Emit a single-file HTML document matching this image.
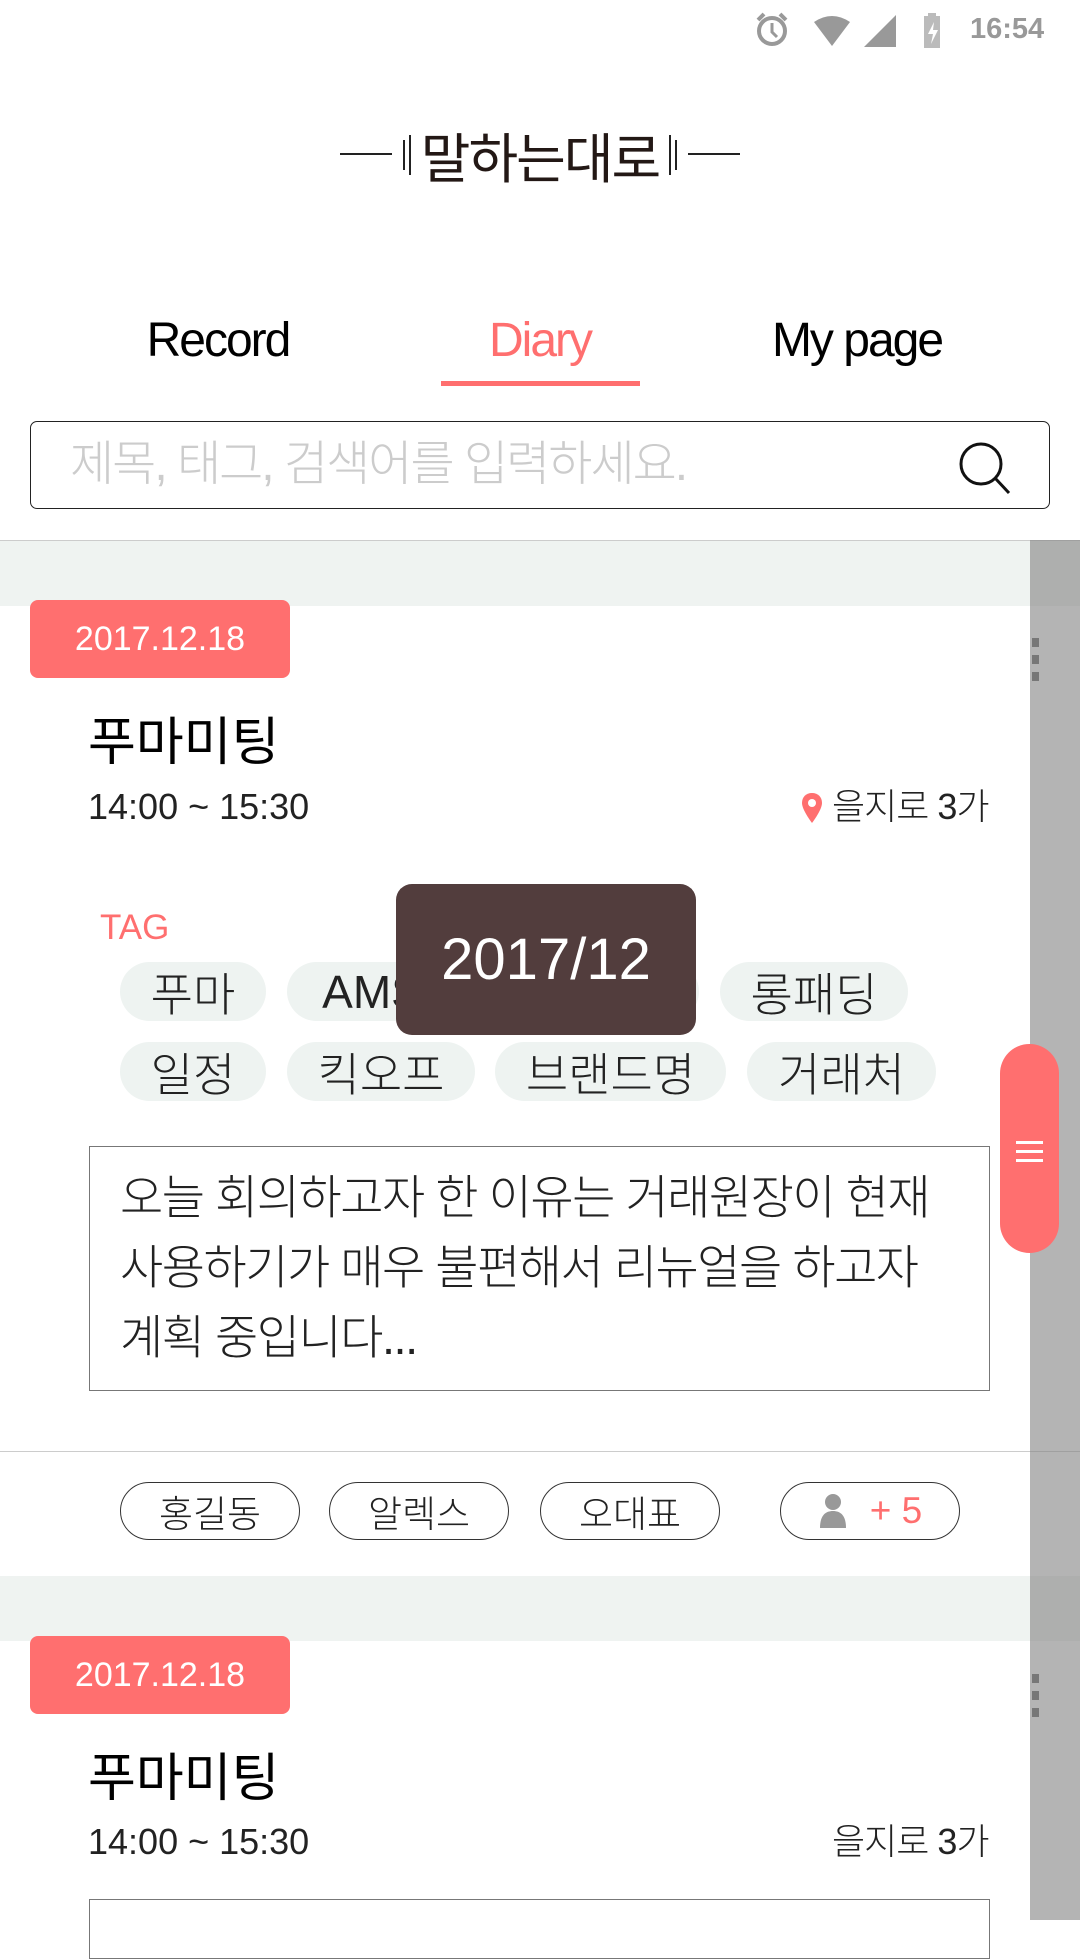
<!DOCTYPE html>
<html><head><meta charset="utf-8"><style>
*{margin:0;padding:0;box-sizing:border-box}
body{width:1080px;height:1920px;position:relative;overflow:hidden;background:#fff;font-family:"Liberation Sans","Noto Sans CJK KR",sans-serif;font-weight:300;color:#111}
.a{position:absolute}
.c{display:flex;align-items:center;justify-content:center}
.chip{position:absolute;height:59px;background:#eef3f1;border-radius:30px;font-size:46px;display:flex;align-items:center;justify-content:center;color:#222}
.p{position:absolute;top:1482px;height:58px;width:180px;border:1.5px solid #333;border-radius:29px;font-size:37px;display:flex;align-items:center;justify-content:center;color:#222}
.badge{position:absolute;left:30px;width:260px;height:78px;background:#ff6f6f;border-radius:8px;color:#fff;font-size:34px;display:flex;align-items:center;justify-content:center}
.dots{position:absolute;left:1032px;width:8px}
.dots i{display:block;width:7px;height:9px;background:#666;margin-bottom:8px}
</style></head><body>
<!-- status bar -->
<svg class="a" style="left:752px;top:10px" width="300" height="40" viewBox="0 0 300 40">
<circle cx="20" cy="21" r="13" fill="none" stroke="#999" stroke-width="4"/><path d="M20 13v9l5 5" stroke="#999" stroke-width="3" fill="none"/><path d="M6 10l6-6M34 10l-6-6" stroke="#999" stroke-width="4"/>
<path d="M62 12 Q80 0 98 12 L80 36Z" fill="#999"/>
<path d="M112 37 L144 5 L144 37Z" fill="#999"/>
<rect x="172" y="6" width="16" height="32" fill="#bbb"/><rect x="176" y="3" width="8" height="4" fill="#bbb"/><path d="M182 12l-6 12h5l-2 10 7-14h-5z" fill="#fff"/>
</svg>
<div class="a" style="left:970px;top:13px;font-size:29px;color:#999;font-weight:700">16:54</div>
<!-- title -->
<div class="a" style="left:340px;top:153px;width:52px;height:2px;background:#222"></div>
<div class="a" style="left:403px;top:140px;width:2px;height:30px;background:#222"></div>
<div class="a" style="left:409px;top:135px;width:2px;height:40px;background:#222"></div>
<div class="a" style="left:688px;top:153px;width:52px;height:2px;background:#222"></div>
<div class="a" style="left:675px;top:140px;width:2px;height:30px;background:#222"></div>
<div class="a" style="left:669px;top:135px;width:2px;height:40px;background:#222"></div>
<div class="a c" style="left:410px;top:118px;width:260px;height:72px;font-size:54px;font-weight:400;color:#231815;letter-spacing:-2px">말하는대로</div>
<!-- tabs -->
<div class="a c" style="left:118px;top:310px;width:200px;height:60px;font-size:48px;color:#000;letter-spacing:-2px;font-weight:400">Record</div>
<div class="a c" style="left:440px;top:310px;width:200px;height:60px;font-size:48px;color:#ff6f6f;letter-spacing:-2px;font-weight:400">Diary</div>
<div class="a c" style="left:737px;top:310px;width:240px;height:60px;font-size:48px;color:#000;letter-spacing:-2px;font-weight:400">My page</div>
<div class="a" style="left:441px;top:381px;width:199px;height:5px;background:#ff6f6f"></div>
<!-- search -->
<div class="a" style="left:30px;top:421px;width:1020px;height:88px;border:1.5px solid #222;border-radius:7px"></div>
<div class="a" style="left:70px;top:434px;font-size:48px;color:#ccc;letter-spacing:-2px;line-height:62px">제목, 태그, 검색어를 입력하세요.</div>
<svg class="a" style="left:955px;top:438px" width="60" height="60" viewBox="0 0 60 60"><circle cx="26" cy="26" r="20" fill="none" stroke="#111" stroke-width="3"/><path d="M40 40l14 15" stroke="#111" stroke-width="3"/></svg>
<!-- bands -->
<div class="a" style="left:0;top:540px;width:1080px;height:66px;background:#eff3f1;border-top:1px solid #ccc"></div>
<div class="a" style="left:0;top:1576px;width:1080px;height:65px;background:#eff3f1"></div>
<!-- card 1 -->
<div class="badge" style="top:600px">2017.12.18</div>
<div class="dots" style="top:638px"><i></i><i></i><i></i></div>
<div class="a" style="left:88px;top:710px;font-size:52px;color:#000;font-weight:400;line-height:66px">푸마미팅</div>
<div class="a" style="left:88px;top:784px;font-size:36px;line-height:46px;color:#222">14:00 ~ 15:30</div>
<svg class="a" style="left:801px;top:792px" width="22" height="32" viewBox="0 0 22 32"><path d="M11 1C5 1 1 5 1 11c0 7 10 20 10 20s10-13 10-20C21 5 17 1 11 1z" fill="#ff6f6f"/><circle cx="11" cy="11" r="4" fill="#fff"/></svg>
<div class="a" style="left:832px;top:784px;font-size:36px;line-height:46px;color:#222;letter-spacing:-1px">을지로 3가</div>
<div class="a" style="left:100px;top:906px;font-size:35px;color:#ff6f6f;line-height:44px">TAG</div>
<div class="chip" style="left:120px;top:962px;width:146px">푸마</div>
<div class="chip" style="left:287px;top:962px;width:170px">AMS</div>
<div class="chip" style="left:471px;top:962px;width:228px">거래원장</div>
<div class="chip" style="left:720px;top:962px;width:188px">롱패딩</div>
<div class="chip" style="left:120px;top:1042px;width:146px">일정</div>
<div class="chip" style="left:287px;top:1042px;width:188px">킥오프</div>
<div class="chip" style="left:495px;top:1042px;width:231px">브랜드명</div>
<div class="chip" style="left:747px;top:1042px;width:189px">거래처</div>
<div class="a c" style="left:396px;top:884px;width:300px;height:151px;background:#523d3d;border-radius:16px;color:#fff;font-size:58px;font-weight:400">2017/12</div>
<div class="a" style="left:89px;top:1146px;width:901px;height:245px;border:1.5px solid #777;padding:16px 0 0 30px;font-size:47px;line-height:70px;color:#222;letter-spacing:-1.5px;white-space:nowrap">오늘 회의하고자 한 이유는 거래원장이 현재<br>사용하기가 매우 불편해서 리뉴얼을 하고자<br>계획 중입니다...</div>
<div class="a" style="left:0;top:1451px;width:1080px;height:1px;background:#ccc"></div>
<div class="p" style="left:120px">홍길동</div>
<div class="p" style="left:329px">알렉스</div>
<div class="p" style="left:540px">오대표</div>
<div class="p" style="left:780px;color:#ff6f6f"><svg width="30" height="38" viewBox="0 0 30 38" style="margin-right:22px"><circle cx="15" cy="10" r="8" fill="#999"/><path d="M2 36c0-12 5-17 13-17s13 5 13 17z" fill="#999"/></svg>+ 5</div>
<!-- card 2 -->
<div class="badge" style="top:1636px">2017.12.18</div>
<div class="dots" style="top:1674px"><i></i><i></i><i></i></div>
<div class="a" style="left:88px;top:1746px;font-size:52px;color:#000;font-weight:400;line-height:66px">푸마미팅</div>
<div class="a" style="left:88px;top:1819px;font-size:36px;line-height:46px;color:#222">14:00 ~ 15:30</div>
<div class="a" style="left:832px;top:1819px;font-size:36px;line-height:46px;color:#222;letter-spacing:-1px">을지로 3가</div>
<div class="a" style="left:89px;top:1899px;width:901px;height:60px;border:1.5px solid #777"></div>
<!-- scrollbar -->
<div class="a" style="left:1030px;top:540px;width:50px;height:1380px;background:rgba(130,130,130,0.6)"></div>
<div class="a" style="left:1000px;top:1044px;width:59px;height:209px;background:#ff6f6f;border-radius:30px"></div>
<div class="a" style="left:1016px;top:1141px;width:27px;height:3px;background:#fff"></div>
<div class="a" style="left:1016px;top:1150px;width:27px;height:3px;background:#fff"></div>
<div class="a" style="left:1016px;top:1159px;width:27px;height:3px;background:#fff"></div>
</body></html>
